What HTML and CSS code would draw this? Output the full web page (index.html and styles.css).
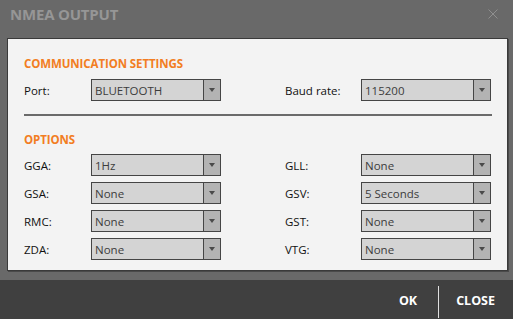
FILE: index.html
```html
<!DOCTYPE html>
<html lang="en">
<head>
  <meta charset="UTF-8" />
  <title>NMEA Output</title>
  <link rel="stylesheet" href="styles.css">
</head>
<body>
  <div class="dialog">
    <div class="title-bar">
      <h1>NMEA OUTPUT</h1>
      <svg class="close-x" width="10" height="10" viewBox="0 0 10 10">
        <path d="M0.5 0.5 L9.5 9.5 M9.5 0.5 L0.5 9.5" stroke="#8f8f8f" stroke-width="1" fill="none"/>
      </svg>
    </div>

    <div class="panel">
      <h2>COMMUNICATION SETTINGS</h2>
      <div class="grid">
        <label>Port:</label>
        <div class="combo"><span>BLUETOOTH</span><i></i></div>
        <div></div>
        <label>Baud rate:</label>
        <div class="combo"><span>115200</span><i></i></div>
      </div>

      <hr>

      <h2>OPTIONS</h2>
      <div class="grid options">
        <label>GGA:</label>
        <div class="combo"><span>1Hz</span><i></i></div>
        <div></div>
        <label>GLL:</label>
        <div class="combo"><span>None</span><i></i></div>

        <label>GSA:</label>
        <div class="combo"><span>None</span><i></i></div>
        <div></div>
        <label>GSV:</label>
        <div class="combo"><span>5 Seconds</span><i></i></div>

        <label>RMC:</label>
        <div class="combo"><span>None</span><i></i></div>
        <div></div>
        <label>GST:</label>
        <div class="combo"><span>None</span><i></i></div>

        <label>ZDA:</label>
        <div class="combo"><span>None</span><i></i></div>
        <div></div>
        <label>VTG:</label>
        <div class="combo"><span>None</span><i></i></div>
      </div>
    </div>

    <div class="footer">
      <button class="btn">OK</button>
      <span class="sep"></span>
      <button class="btn">CLOSE</button>
    </div>
  </div>
</body>
</html>
```

FILE: styles.css
```css
body {
  margin: 0;
  font-family: 'Open Sans', 'Liberation Sans', sans-serif;
  background-color: #696969;
  width: 513px;
  height: 319px;
  overflow: hidden;
}

.dialog {
  display: flex;
  flex-direction: column;
  height: 319px;
}

.title-bar {
  height: 38px;
  display: flex;
  align-items: flex-start;
  justify-content: space-between;
  padding: 0 15px 0 10px;
  box-sizing: border-box;
}

.title-bar h1 {
  margin: 4px 0 0 0;
  font-size: 15px;
  font-weight: 700;
  color: #969696;
  letter-spacing: -0.2px;
}

.close-x {
  margin-top: 9px;
}

.panel {
  margin: 0 5px 0 7px;
  height: 233px;
  box-sizing: border-box;
  background: #f3f3f3;
  border: 1px solid #3a3a3a;
  box-shadow: 1px 1px 0 #4a4a4a;
  padding: 17px 15px 0 16px;
}

.panel h2 {
  margin: 0;
  font-size: 11.5px;
  line-height: 16px;
  font-weight: 700;
  color: #f27d22;
  letter-spacing: -0.1px;
}

.grid {
  display: grid;
  grid-template-columns: 67px 130px 64px 76px 130px;
  align-items: center;
  margin-top: 7px;
}

.grid.options {
  margin-top: 6px;
  row-gap: 6px;
}

label {
  font-size: 11.5px;
  color: #111;
}

.combo {
  height: 22px;
  box-sizing: border-box;
  border: 1px solid #454545;
  background: #d4d4d4;
  display: flex;
  align-items: center;
}

.combo span {
  flex: 1;
  padding-left: 3px;
  font-size: 11.5px;
  color: #3c3c3c;
}

.combo i {
  width: 16px;
  height: 20px;
  background: #b3b3b3;
  border-left: 1px solid #454545;
  position: relative;
}

.combo i::after {
  content: '';
  position: absolute;
  left: 5px;
  top: 8px;
  border-left: 3px solid transparent;
  border-right: 3px solid transparent;
  border-top: 4px solid #4a4a4a;
}

hr {
  border: none;
  height: 2px;
  background: #6a6a6a;
  margin: 13px 0 16px 0;
}

.footer {
  margin-top: 9px;
  flex: 1;
  background: #404040;
  display: flex;
  align-items: center;
  justify-content: flex-end;
  padding-right: 18px;
}

.btn {
  background: none;
  border: none;
  color: #fff;
  font-family: 'Open Sans', 'Liberation Sans', sans-serif;
  font-weight: 700;
  font-size: 12.5px;
  padding: 0;
  margin-top: 2px;
}

.sep {
  width: 1px;
  height: 32px;
  background: #e0e0e0;
  margin: 4px 17px 0 21px;
}
```
